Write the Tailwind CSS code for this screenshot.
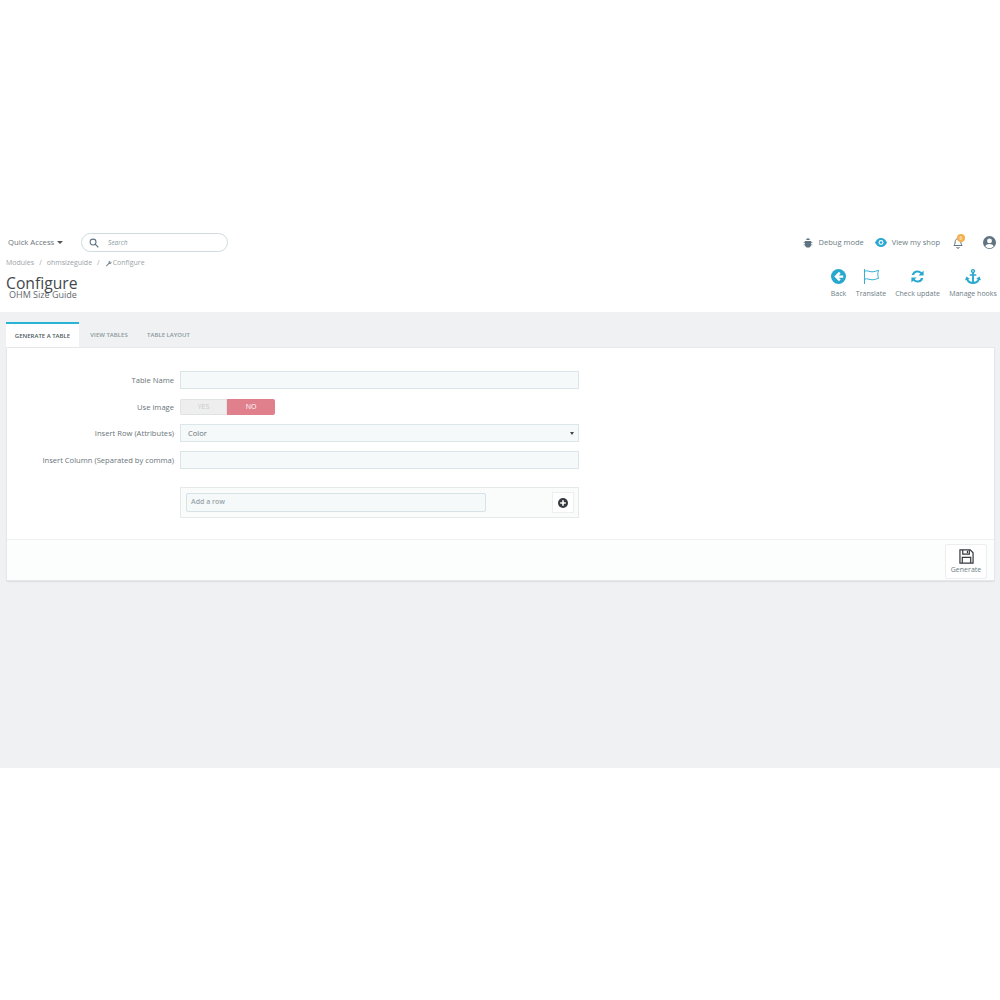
<!DOCTYPE html>
<html lang="en">
<head>
    <meta charset="UTF-8">
    <title>Configure - OHM Size Guide</title>
    <script src="https://cdn.jsdelivr.net/npm/@tailwindcss/browser@4"></script>
</head>
<body class="bg-white font-['Open_Sans',sans-serif] text-[#6c868e] h-[1000px] overflow-hidden">
    <div class="h-[233px]"></div>

    <!-- Top bar -->
    <div class="h-[19px] flex items-center pl-[8px] pr-[4px]">
        <span class="mt-[1px] text-[7.700px] text-[#6a7478] flex items-center gap-[3px] w-[73px]">Quick Access
            <span class="w-0 h-0 border-x-[3px] border-x-transparent border-t-[3px] border-t-[#555]"></span>
        </span>
        <div class="w-[147px] h-[19px] border border-[#cfdcdf] rounded-full flex items-center pl-[7px]">
            <svg width="10" height="10" viewBox="0 0 16 16" fill="none" stroke="#5f7480" stroke-width="1.700"><circle cx="6.500" cy="6.500" r="4.700"/><path d="M10 10l5 5"/></svg>
            <span class="ml-[9px] text-[6.500px] italic text-[#8a9aa0]">Search</span>
        </div>
        <div class="ml-auto flex items-center">
            <svg width="10" height="11" viewBox="0 0 16 16" fill="#5f7480"><path d="M5 4a3 3 0 0 1 6 0zM3 5.500h10V11a5 5 0 0 1-10 0zM1 7h2v1.500H1zM13 7h2v1.500h-2zM1 11h2v1.500H1zM13 11h2v1.500h-2z"/></svg>
            <span class="ml-[6px] text-[7.500px] text-[#6c7d84]">Debug mode</span>
            <svg class="ml-[11px]" width="12" height="9" viewBox="0 0 16 12"><path fill="#29a8cf" d="M8 0C4.500 0 1.500 2.400 0 6c1.500 3.600 4.500 6 8 6s6.500-2.400 8-6c-1.500-3.600-4.500-6-8-6z"/><circle cx="8" cy="6" r="3.300" fill="#fff"/><circle cx="8" cy="6" r="1.800" fill="#29a8cf"/></svg>
            <span class="ml-[5px] text-[7.500px] text-[#6c7d84]">View my shop</span>
            <div class="relative ml-[13px] w-[10px] h-[12px]">
                <svg width="10" height="12" viewBox="0 0 16 18" fill="none" stroke="#5f7480" stroke-width="1.600"><path d="M8 2c-3 0-4.500 2.500-4.500 5 0 3-1 4.500-2 6h13c-1-1.500-2-3-2-6 0-2.500-1.500-5-4.500-5z"/><path d="M6 15.500a2 2 0 0 0 4 0"/></svg>
                <span class="absolute -top-[3px] left-[4px] w-[8px] h-[8px] rounded-full bg-[#f5b04c] text-white text-[5px] leading-[8px] text-center">6</span>
            </div>
            <svg class="ml-[20px]" width="13" height="13" viewBox="0 0 16 16"><circle cx="8" cy="8" r="8" fill="#5f7480"/><circle cx="8" cy="6" r="3" fill="#fff"/><path fill="#fff" d="M2.800 12.600C3.600 10.600 5.600 9.800 8 9.800s4.400.8 5.200 2.800A7 7 0 0 1 8 15a7 7 0 0 1-5.200-2.400z"/></svg>
        </div>
    </div>

    <!-- Page head -->
    <div class="h-[60px] flex justify-between pl-[6px] pr-[3px]">
        <div>
            <div class="mt-[6px] text-[7px] leading-[10px] text-[#9aa3a7] flex gap-[5px] items-center">
                <span>Modules</span><span>/</span><span>ohmsizeguide</span><span>/</span>
                <span class="flex items-center gap-[1px]">
                    <svg width="7" height="7" viewBox="0 0 16 16" fill="#7b8a8f"><path d="M2 13l6-6a4 4 0 0 1 5-5l-2.500 2.500 1.500 1.500L14.500 3.500A4 4 0 0 1 9.500 9l-6 6z"/></svg>
                    Configure
                </span>
            </div>
            <h1 class="mt-[5px] text-[15.700px] leading-[21px] text-[#44484e]">Configure</h1>
            <p class="-mt-[5px] ml-[3px] text-[9px] leading-[12px] text-[#5f676b]">OHM Size Guide</p>
        </div>
        <div class="flex pt-[17px] text-[7px] text-[#6c7d84]">
            <div class="flex flex-col items-center gap-[5px] w-[17px] mr-[8px]">
                <svg width="15" height="15" viewBox="0 0 16 16"><circle cx="8" cy="8" r="8" fill="#29a8cf"/><path fill="#fff" d="M8.500 3L3.500 8l5 5 1.800-1.800-2-2H13V6.800H8.300l2-2z"/></svg>
                <span class="leading-[9px]">Back</span>
            </div>
            <div class="flex flex-col items-center gap-[5px] w-[32px] mr-[8px]">
                <svg width="17" height="15" viewBox="0 0 18 16" fill="none" stroke="#29a8cf" stroke-width="1"><path d="M1.500 0v16"/><path d="M1.500 2.500c3-1.500 5 .5 8 .5 3 0 4.500-1 7-1.500-1 3-1 5.500 0 8.500-2.500.5-4 1.500-7 1.500s-5-2-8-.5"/></svg>
                <span class="leading-[9px]">Translate</span>
            </div>
            <div class="flex flex-col items-center gap-[5px] w-[45px] mr-[9px]">
                <svg width="15" height="15" viewBox="0 0 16 16" fill="#29a8cf"><path d="M8 1.500a6.500 6.500 0 0 1 4.600 1.900L14.500 1.500V7H9l2-2a4 4 0 0 0-6.700 1.500H1.800A6.500 6.500 0 0 1 8 1.500z"/><path d="M8 14.500a6.500 6.500 0 0 1-4.600-1.900L1.500 14.500V9H7l-2 2a4 4 0 0 0 6.700-1.500h2.500A6.500 6.500 0 0 1 8 14.500z"/></svg>
                <span class="leading-[9px]">Check update</span>
            </div>
            <div class="flex flex-col items-center gap-[5px] w-[48px]">
                <svg width="18" height="15" viewBox="0 0 18 16" fill="#29a8cf"><path fill-rule="evenodd" d="M9 0a2.200 2.200 0 0 1 1 4.200V5.500h2.500v1.800H10v6.400c2-.3 3.400-1.300 4-2.700l-1.500-.5L16 8l1.500 4-1.500-.4C15 14.300 12.300 16 9 16s-6-1.700-7-4.400L.5 12 2 8l3.500 2.500-1.500.5c.6 1.400 2 2.400 4 2.700V7.300H5.500V5.500H8V4.200A2.200 2.200 0 0 1 9 0zm0 1.400a.8.800 0 1 0 0 1.600.8.800 0 0 0 0-1.600z"/></svg>
                <span class="leading-[9px]">Manage hooks</span>
            </div>
        </div>
    </div>

    <!-- Gray content area -->
    <div class="h-[456px] bg-[#eff1f2] px-[6px] pt-[10px]">
        <div class="flex h-[25px] text-[6px] uppercase">
            <div class="w-[73px] bg-white border-t-2 border-[#29b4d6] flex items-center justify-center pt-[1px] text-[#4f5b60] font-semibold">Generate a table</div>
            <div class="w-[60px] flex items-center justify-center pt-[1px] text-[#8b989d] font-semibold">View tables</div>
            <div class="w-[59px] flex items-center justify-center pt-[1px] text-[#8b989d] font-semibold">Table layout</div>
        </div>
        <div class="w-[989px] h-[234px] bg-white border border-[#e4e8ea] rounded-b-[2px] shadow-[0_1px_1px_rgba(0,0,0,0.08)] flex flex-col">
            <div class="h-[191px] pt-[23px]">
                <div class="flex flex-col text-[7.600px] text-[#6a7478]">
                    <div class="flex items-center h-[18px]">
                        <label class="w-[173px] text-right pr-[6px] pt-[1px]">Table Name</label>
                        <div class="w-[399px] h-[18px] bg-[#f5f9f9] border border-[#dbe6e9]"></div>
                    </div>
                    <div class="flex items-center h-[16px] mt-[10px]">
                        <label class="w-[173px] text-right pr-[6px] pt-[1px]">Use image</label>
                        <div class="flex w-[95px] h-[16px] rounded-[2px] overflow-hidden text-[7px]">
                            <span class="w-[47px] bg-[#eeeeee] border border-[#dfe3e4] pt-[1px] text-[#c4cacc] flex items-center justify-center">YES</span>
                            <span class="w-[48px] bg-[#e0808c] pt-[1px] text-white flex items-center justify-center">NO</span>
                        </div>
                    </div>
                    <div class="flex items-center h-[18px] mt-[9px]">
                        <label class="w-[173px] text-right pr-[6px] pt-[1px]">Insert Row (Attributes)</label>
                        <div class="w-[399px] h-[18px] bg-[#f5f9f9] border border-[#dbe6e9] flex items-center justify-between pl-[7px] pr-[4px]">
                            <span class="pt-[1px]">Color</span>
                            <span class="w-0 h-0 border-x-[2px] border-x-transparent border-t-[3px] border-t-[#444]"></span>
                        </div>
                    </div>
                    <div class="flex items-center h-[18px] mt-[9px]">
                        <label class="w-[173px] text-right pr-[6px] pt-[1px]">Insert Column (Separated by comma)</label>
                        <div class="w-[399px] h-[18px] bg-[#f5f9f9] border border-[#dbe6e9]"></div>
                    </div>
                </div>
                <div class="ml-[173px] mt-[18px] w-[399px] h-[31px] bg-[#fafbfb] border border-[#e6e9ea] flex items-center pl-[5px] pr-[4px] justify-between">
                    <div class="w-[300px] h-[19px] bg-[#f5f9f9] border border-[#d5e2e7] rounded-[2px] flex items-center pl-[4px] text-[7px] font-semibold text-[#9aa5a9]">Add a row</div>
                    <div class="w-[22px] h-[21px] bg-white border border-[#eceeef] flex items-center justify-center">
                        <svg width="10" height="10" viewBox="0 0 16 16"><circle cx="8" cy="8" r="8" fill="#363a41"/><path fill="#fff" d="M6.700 3.500h2.600v3.200h3.200v2.600H9.300v3.200H6.700V9.300H3.500V6.700h3.200z"/></svg>
                    </div>
                </div>
            </div>
            <div class="flex-1 bg-[#fcfdfd] border-t border-[#eef0f1] flex justify-end items-start pt-[4px] pr-[7px]">
                <div class="w-[42px] h-[35px] bg-white border border-[#eceeef] rounded-[2px] flex flex-col items-center pt-[4px] text-[7px] text-[#6c7d84]">
                    <svg width="15" height="15" viewBox="0 0 16 16" fill="none" stroke="#363a41" stroke-width="1.300"><path d="M1 1h11l3 3v11H1z"/><path d="M4 1v4.500h7V1"/><path d="M9 2v2.500"/><path d="M3.500 15V9h9v6"/></svg>
                    <span class="mt-[1px] leading-[9px]">Generate</span>
                </div>
            </div>
        </div>
    </div>
</body>
</html>
